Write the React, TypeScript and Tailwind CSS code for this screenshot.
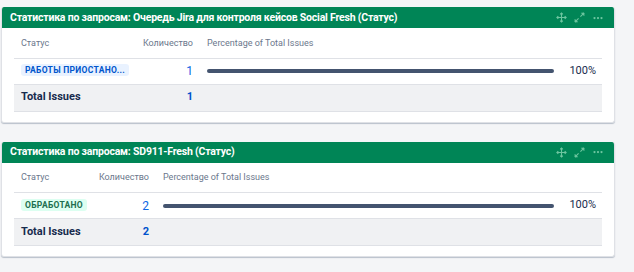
import { MoreHorizontal } from 'lucide-react'

type Row = { status: string; tone: 'blue' | 'green'; count: number }

type Gadget = {
  title: string
  cols: [string, string] // widths of status + count columns
  row: Row
  total: number
}

const GADGETS: Gadget[] = [
  {
    title: 'Статистика по запросам: Очередь Jira для контроля кейсов Social Fresh (Статус)',
    cols: ['w-[122px]', 'w-[64px]'],
    row: { status: 'РАБОТЫ ПРИОСТАНО...', tone: 'blue', count: 1 },
    total: 1,
  },
  {
    title: 'Статистика по запросам: SD911-Fresh (Статус)',
    cols: ['w-[77px]', 'w-[65px]'],
    row: { status: 'ОБРАБОТАНО', tone: 'green', count: 2 },
    total: 2,
  },
]

function MoveIcon() {
  return (
    <svg width="11" height="11" viewBox="0 0 12 12" fill="none" stroke="currentColor" strokeWidth="1.2">
      <path d="M6 1v10M1 6h10" />
      <path d="M4.5 2.5 6 1l1.5 1.5M4.5 9.5 6 11l1.5-1.5M2.5 4.5 1 6l1.5 1.5M9.5 4.5 11 6 9.5 7.5" />
    </svg>
  )
}

function ExpandIcon() {
  return (
    <svg width="11" height="11" viewBox="0 0 12 12" fill="currentColor" stroke="currentColor" strokeWidth="1.2">
      <path d="M7 5l4-4M5 7l-4 4" fill="none" />
      <path d="M8 1h3v3z M1 8v3h3z" strokeWidth="0.6" />
    </svg>
  )
}

function Lozenge({ text, tone }: { text: string; tone: 'blue' | 'green' }) {
  const cls = tone === 'blue' ? 'bg-[#e9f2ff] text-[#0055cc]' : 'bg-[#dcfff1] text-[#216e4e]'
  return (
    <span className={`inline-block rounded-[3px] px-[4px] h-[12px] leading-[12px] text-[8.5px] font-bold tracking-[0.3px] ${cls}`}>
      {text}
    </span>
  )
}

function GadgetCard({ g }: { g: Gadget }) {
  return (
    <div className="w-[614px] bg-white border border-[#dfe1e6] border-t-0 rounded-[3px] shadow-[0_1px_1px_rgba(9,30,66,0.25)] overflow-hidden">
      <div className="h-[21px] bg-[#008556] flex items-center pl-[8px] pr-[10px]">
        <h3 className="flex-1 text-white text-[10.5px] font-bold tracking-[-0.2px] whitespace-nowrap">{g.title}</h3>
        <div className="flex items-center gap-[7px] text-[#6ec6a0]">
          <MoveIcon />
          <ExpandIcon />
          <MoreHorizontal size={12} strokeWidth={2.5} />
        </div>
      </div>
      <div className="px-[12px] pb-[10px]">
        <table className="w-full border-collapse text-[9px]">
          <thead>
            <tr className="h-[30px] border-b border-[#dfe1e6] text-[#6b778c] text-left">
              <th className={`${g.cols[0]} font-normal pl-[7px] pt-[1px]`}>Статус</th>
              <th className={`${g.cols[1]} font-normal text-right pr-[7px] pt-[1px]`}>Количество</th>
              <th className="font-normal pl-[7px] pt-[1px]">Percentage of Total Issues</th>
            </tr>
          </thead>
          <tbody>
            <tr className="h-[26px] border-b border-[#dfe1e6]">
              <td className="pl-[7px]"><Lozenge text={g.row.status} tone={g.row.tone} /></td>
              <td className="text-right pr-[7px] text-[12px] text-[#0c66e4]">{g.row.count}</td>
              <td className="pl-[7px] pr-[6px]">
                <div className="flex items-center">
                  <div className="flex-1 h-[4px] rounded-full bg-[#44546f] mr-[15px]" />
                  <span className="text-[11px] text-[#172b4d]">100%</span>
                </div>
              </td>
            </tr>
            <tr className="h-[27px] bg-[#f0f1f3] border-b border-[#dfe1e6]">
              <td className="pl-[7px] text-[11px] font-bold text-[#172b4d]">Total Issues</td>
              <td className="text-right pr-[7px] text-[11px] font-bold text-[#0052cc]">{g.total}</td>
              <td />
            </tr>
          </tbody>
        </table>
      </div>
    </div>
  )
}

export default function App() {
  return (
    <div className="w-[634px] h-[272px] bg-[#f4f5f7] pt-[7px] pl-[1px] flex flex-col gap-[19px] font-['Roboto',sans-serif]">
      {GADGETS.map(g => <GadgetCard key={g.title} g={g} />)}
    </div>
  )
}
